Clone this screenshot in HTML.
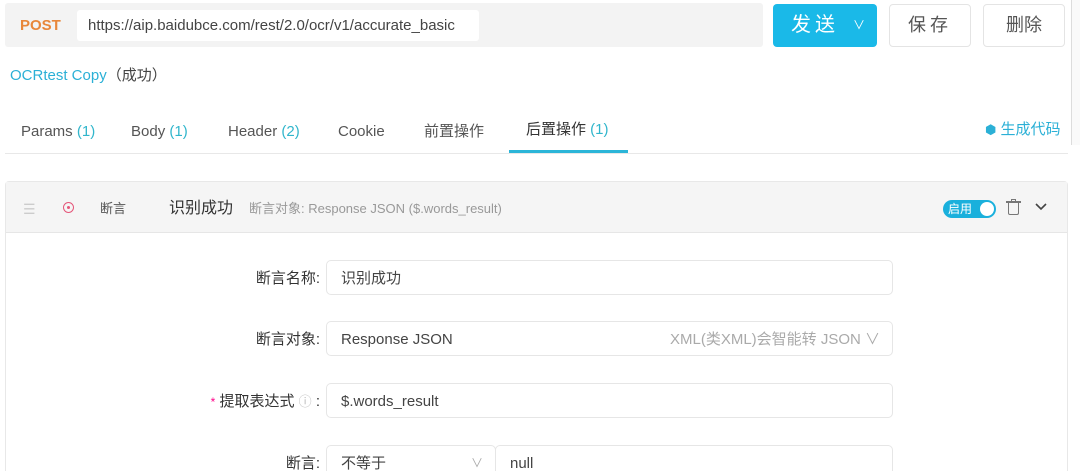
<!DOCTYPE html>
<html><head><meta charset="utf-8"><style>
*{box-sizing:border-box;margin:0;padding:0}
html,body{width:1080px;height:471px;overflow:hidden}
body{background:#fff;font-family:"Liberation Sans","Noto Sans CJK SC",sans-serif;position:relative;color:#333}
.a{position:absolute;white-space:nowrap;line-height:20px}
.btn{position:absolute;border:1px solid #e4e4e4;border-radius:4px;background:#fff;font-size:18px;color:#555;text-align:center;line-height:40px}
.lbl{position:absolute;font-size:15px;color:#333;text-align:right;width:140px;left:180px;line-height:20px}
.inp{position:absolute;left:326px;width:567px;height:35px;border:1px solid #e6e6e6;border-radius:5px;font-size:15px;color:#444;padding-left:14px;line-height:35px;overflow:hidden}
.t{top:122px;font-size:15px;color:#555}
</style></head><body>
<div class="a" style="left:5px;top:3px;width:758px;height:44px;background:#f3f3f3;border-radius:3px"></div>
<div class="a" style="left:20px;top:16px;font-size:15px;font-weight:bold;color:#e8873a">POST</div>
<div class="a" style="left:77px;top:10px;width:402px;height:31px;background:#fff;border-radius:3px"></div>
<div class="a" style="left:88px;top:16px;font-size:15px;color:#444">https://aip.baidubce.com/rest/2.0/ocr/v1/accurate_basic</div>
<div class="a" style="left:773px;top:4px;width:104px;height:43px;background:#1ab9e8;border-radius:4px;color:#fff;font-size:20px;line-height:43px;padding-left:18px;letter-spacing:4px">发送<span style="position:absolute;right:12px;top:0;font-size:12px;letter-spacing:0">∨</span></div>
<div class="btn" style="left:889px;top:4px;width:82px;height:43px;letter-spacing:4px">保存</div>
<div class="btn" style="left:983px;top:4px;width:82px;height:43px">删除</div>
<div class="a" style="left:1071px;top:0;width:9px;height:145px;border-left:1px solid #ddd;background:#fafafa"></div>
<div class="a" style="left:10px;top:66px;font-size:15px;color:#2bb0d6">OCRtest Copy<span style="color:#444">（成功）</span></div>
<div class="a t" style="left:21px">Params <span style="color:#31b6cc">(1)</span></div>
<div class="a t" style="left:131px">Body <span style="color:#31b6cc">(1)</span></div>
<div class="a t" style="left:228px">Header <span style="color:#31b6cc">(2)</span></div>
<div class="a t" style="left:338px">Cookie</div>
<div class="a t" style="left:424px">前置操作</div>
<div class="a t" style="left:526px;top:120px;color:#333">后置操作 <span style="color:#31b6cc">(1)</span></div>
<div class="a" style="left:509px;top:150px;width:119px;height:3px;background:#2bb5d8"></div>
<div class="a" style="left:5px;top:153px;width:1063px;height:1px;background:#e8e8e8"></div>
<div class="a" style="left:985px;top:120px;font-size:15px;color:#2bb0d6"><span style="font-size:13px">⬢</span> 生成代码</div>
<div class="a" style="left:5px;top:181px;width:1063px;height:290px;border:1px solid #e8e8e8;border-bottom:none;border-radius:4px 4px 0 0"></div>
<div class="a" style="left:6px;top:182px;width:1061px;height:51px;background:#f5f5f5;border-bottom:1px solid #e6e6e6"></div>
<div class="a" style="left:23px;top:199px;font-size:14px;color:#ccc">☰</div>
<div class="a" style="left:63px;top:202px;width:11px;height:11px;border:1.5px solid #e5577a;border-radius:50%"></div>
<div class="a" style="left:67px;top:206px;width:3px;height:3px;background:#e5577a;border-radius:50%"></div>
<div class="a" style="left:100px;top:199px;font-size:13px;color:#555">断言</div>
<div class="a" style="left:169px;top:199px;font-size:16px;color:#333">识别成功</div>
<div class="a" style="left:249px;top:199px;font-size:13px;color:#999">断言对象: Response JSON ($.words_result)</div>
<div class="a" style="left:943px;top:200px;width:53px;height:18px;border-radius:9px;background:#1ab0dc;color:#fff;font-size:12px;line-height:18px;padding-left:5px">启用<span style="position:absolute;right:2px;top:2px;width:14px;height:14px;border-radius:50%;background:#fff"></span></div>
<div class="a" style="left:1008px;top:202px;width:11px;height:13px;border:1.5px solid #777;border-top:none;border-radius:0 0 2px 2px"></div>
<div class="a" style="left:1006px;top:201px;width:15px;height:1.5px;background:#777"></div>
<div class="a" style="left:1011px;top:199px;width:5px;height:2px;border:1px solid #777;border-bottom:none"></div>
<svg class="a" style="left:1035px;top:203px" width="12" height="8"><path d="M1 1l5 5 5-5" fill="none" stroke="#444" stroke-width="1.6"/></svg>
<div class="lbl" style="top:269px">断言名称:</div>
<div class="inp" style="top:260px">识别成功</div>
<div class="lbl" style="top:330px">断言对象:</div>
<div class="inp" style="top:321px">Response JSON<span style="position:absolute;right:12px;color:#aaa">XML(类XML)会智能转 JSON ∨</span></div>
<div class="lbl" style="top:392px"><span style="color:#f08;font-size:12px">*</span> 提取表达式 <span style="color:#bbb;font-size:13px">ⓘ</span> :</div>
<div class="inp" style="top:383px">$.words_result</div>
<div class="lbl" style="top:454px">断言:</div>
<div class="inp" style="top:445px;width:170px;height:26px;border-bottom:none;border-radius:5px 5px 0 0">不等于<span style="position:absolute;right:12px;color:#aaa;font-size:12px">∨</span></div>
<div class="inp" style="top:445px;left:495px;width:398px;height:26px;border-bottom:none;border-radius:5px 5px 0 0">null</div>
</body></html>
